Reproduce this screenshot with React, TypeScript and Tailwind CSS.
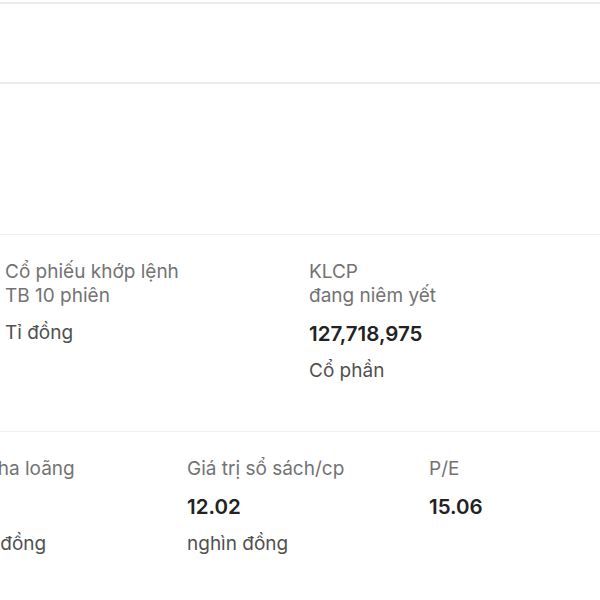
const rowOne = [
  { label: ["Cổ phiếu khớp lệnh", "TB 10 phiên"], value: "", unit: "Tỉ đồng" },
  { label: ["KLCP", "đang niêm yết"], value: "127,718,975", unit: "Cổ phần" },
];

const rowTwo = [
  { label: ["EPS pha loãng"], value: "1,050", unit: "nghìn đồng" },
  { label: ["Giá trị sổ sách/cp"], value: "12.02", unit: "nghìn đồng" },
  { label: ["P/E"], value: "15.06", unit: "" },
];

type Stat = { label: string[]; value: string; unit: string };

function StatCell({ stat }: { stat: Stat }) {
  return (
    <div className="flex flex-col">
      <div className="text-[#737373] leading-6">
        {stat.label.map((l) => (
          <div key={l} className="whitespace-nowrap">{l}</div>
        ))}
      </div>
      {stat.value && (
        <div className="mt-[14px] font-semibold text-[20.5px] leading-6 text-[#222]">{stat.value}</div>
      )}
      {stat.unit && <div className="mt-[13px] leading-6 text-[#505050] whitespace-nowrap">{stat.unit}</div>}
    </div>
  );
}

export default function App() {
  return (
    <main
      className="w-[600px] h-[600px] overflow-hidden bg-white text-[19px]"
      style={{ fontFamily: "Inter, 'Noto Sans', sans-serif" }}
    >
      <div className="pt-[2px]">
        <div className="h-[82px] border-y-2 border-[#ebebeb]" />
      </div>

      <div className="h-[150px]" />

      <section className="border-t border-[#efefef] h-[197px] pt-[25px]">
        <div className="grid grid-cols-[304px_304px] pl-[5px]">
          {rowOne.map((s) => (
            <StatCell key={s.label[0]} stat={s} />
          ))}
        </div>
      </section>

      <section className="border-t border-[#efefef] pt-[25px]">
        <div className="grid grid-cols-[242px_242px_242px] ml-[-55px]">
          {rowTwo.map((s) => (
            <StatCell key={s.label[0]} stat={s} />
          ))}
        </div>
      </section>
    </main>
  );
}
